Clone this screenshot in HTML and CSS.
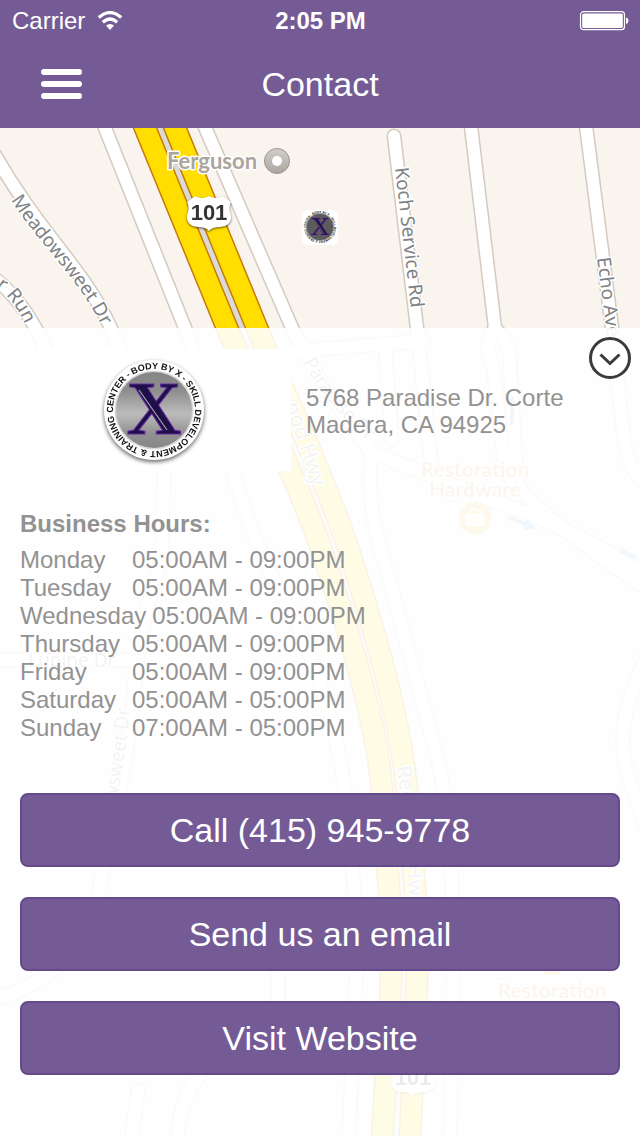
FILE: index.html
```html
<!DOCTYPE html>
<html lang="en">
<head>
<meta charset="utf-8">
<meta name="viewport" content="width=device-width, initial-scale=1">
<title>Contact</title>
<link rel="stylesheet" href="styles.css">
</head>
<body>
<div class="screen">
  <header class="header">
    <div class="status">
      <div class="status-left">
        <span>Carrier</span>
        <svg class="wifi" viewBox="0 0 26 20" aria-hidden="true">
          <path d="M1.800 6.600Q13-3.400 24.200 6.600" fill="none" stroke="#fff" stroke-width="3.400"/>
          <path d="M5.800 11.300Q13 4.700 20.200 11.300" fill="none" stroke="#fff" stroke-width="3.200"/>
          <path d="M9 14.500Q13 11.300 17 14.500L13 19z" fill="#fff"/>
        </svg>
      </div>
      <time class="clock">2:05 PM</time>
      <svg class="battery" viewBox="0 0 50 20" aria-hidden="true">
        <rect x="1.500" y=".7" width="44" height="18" rx="3" fill="none" stroke="#fff" stroke-width="1.200"/>
        <rect x="3.200" y="2.400" width="40.600" height="14.600" rx="1.600" fill="#fff"/>
        <path d="M47 6.500q2.500 .5 2.500 3.300t-2.500 3.300z" fill="#fff"/>
      </svg>
    </div>
    <nav class="nav">
      <button class="menu" type="button" aria-label="Menu"><span></span><span></span><span></span></button>
      <h1 class="title">Contact</h1>
    </nav>
  </header>

  <main class="main">
    <svg class="map" viewBox="0 128 640 1008" preserveAspectRatio="xMidYMin slice" aria-hidden="true">
      <defs>
        <linearGradient id="disc" x1="0" y1="0" x2="0" y2="1">
          <stop offset="0" stop-color="#858585"/><stop offset=".25" stop-color="#8e8e8e"/>
          <stop offset=".55" stop-color="#bcbcbc"/><stop offset=".8" stop-color="#929292"/>
          <stop offset="1" stop-color="#888"/>
        </linearGradient>
        <linearGradient id="place" x1="0" y1="0" x2="0" y2="1">
          <stop offset="0" stop-color="#d2cfca"/><stop offset="1" stop-color="#aaa69f"/>
        </linearGradient>
        <path id="ring-line" d="M-21-35.200A41 41 0 1 1-21.100-35.140"/>
        <g id="ring">
          <circle r="50" fill="#fff"/>
          <text class="ring-text"><textPath href="#ring-line">BODY BY X - SKILL DEVELOPMENT &amp; TRAINING CENTER -</textPath></text>
        </g>
        <g id="letter">
          <text class="letter" x="0" y="24" text-anchor="middle">X</text>
          <path d="M-15-20L13 20" fill="none" stroke="#a9a3b3" stroke-width="1.200"/>
        </g>
        <g id="shield">
          <path d="M-14-17Q-7-13 0-17Q7-13 14-17L22-11Q19-5 22 2Q23 13 11 14Q3 14 0 18Q-3 14-11 14Q-23 13-22 2Q-19-5-22-11Z"/>
          <text y="7" text-anchor="middle">101</text>
        </g>
        <path id="meadow" d="M11 200C34 238 82 282 103 329"/>
        <path id="run" d="M-4 287Q13 297 28 330"/>
        <path id="koch" d="M395 168L412 318"/>
        <path id="echo" d="M597 258L609 350"/>
        <path id="paradise" d="M303 362Q326 406 372 444"/>
        <path id="redwood" d="M264 355Q297 430 326 530"/>
        <path id="redwood-south" d="M396 767Q409 840 410 940"/>
        <path id="meadow-south" d="M107 862C116 800 126 760 130 700"/>
        <g id="streets" fill="none" stroke-linecap="round">
          <path d="M-8 150C44 242 88 270 116 340Q150 400 164 470L162 560Q140 620 134 690Q128 760 106 850L96 910Q70 980-10 1000"/>
          <path d="M-10 275Q25 300 46 350"/>
          <path d="M101 118L185 328L196 356"/>
          <path d="M201 118L292 328Q316 380 372 452L490 500Q580 530 650 578"/>
          <path d="M394 136L417 328L432 470"/>
          <path d="M470 118L495 328Q482 345 493 365L505 470Q540 520 650 590"/>
          <path d="M495 328Q512 345 510 365L517 480"/>
          <path d="M585 118L612 328L624 440Q630 475 650 486"/>
          <path d="M296 351L424 341"/><path d="M385 345L392 440"/>
          <path d="M372 452Q365 500 384 560Q408 650 438 760Q455 840 453 980L450 1150"/>
          <path d="M230 460Q250 540 290 610Q335 700 346 800Q358 900 356 980L348 1150"/>
          <path d="M0 660H138"/><path d="M650 650C600 750 630 770 650 840"/>
          <path d="M138 1090L130 1150"/><path d="M205 1070Q175 1100 178 1150"/><path d="M278 960V1020"/>
        </g>
        <g id="highway" fill="none">
          <path d="M141 118L227 328C260 405 302 490 325 560S360 670 373 730S383 830 387 867S392 950 391 980S385 1090 382 1140"/>
          <path d="M171 118L257 328C290 405 330 490 352 560S386 670 398 730S409 830 413 867S418 950 417 980S412 1090 410 1140"/>
        </g>
      </defs>
      <rect y="128" width="640" height="1008" fill="#f9f4ed"/>
      <use href="#streets" stroke="#d3cac0" stroke-width="15"/>
      <use href="#streets" stroke="#fff" stroke-width="12"/>
      <path d="M158 118L244 328C277 405 318 490 341 560S373 670 386 730S396 830 400 867S405 950 404 980S398 1090 396 1140" fill="none" stroke="#dcdad7" stroke-width="10"/>
      <use href="#highway" stroke="#c77a0c" stroke-width="23"/>
      <use href="#highway" stroke="#ffde00" stroke-width="20"/>

      <g class="road-label">
        <text><textPath href="#meadow">Meadowsweet Dr</textPath></text>
        <text><textPath href="#run">r Run</textPath></text>
        <text><textPath href="#koch">Koch Service Rd</textPath></text>
        <text><textPath href="#echo">Echo Ave</textPath></text>
        <text><textPath href="#paradise">Paradise Dr</textPath></text>
        <text class="road-major"><textPath href="#redwood">Redwood Hwy</textPath></text>
        <text class="road-major"><textPath href="#redwood-south">Redwood Hwy</textPath></text>
        <text><textPath href="#meadow-south">Meadowsweet Dr</textPath></text>
        <text x="28" y="667">Lupine Dr</text>
      </g>
      <text class="place-label" x="167" y="169">Ferguson</text>
      <circle cx="277" cy="161" r="12.500" fill="url(#place)" stroke="#99958e"/>
      <circle cx="277" cy="161" r="5" fill="#fff"/>
      <g class="shop-label" text-anchor="middle">
        <text x="475" y="477">Restoration</text><text x="475" y="497">Hardware</text>
        <text x="552" y="998">Restoration</text>
      </g>
      <circle cx="475" cy="518" r="16.500" fill="#f5c04a"/>
      <path d="M466 514h18v12h-18z" fill="#fff"/>
      <path d="M470 514v-2q5-7 10 0v2" fill="none" stroke="#fff" stroke-width="2"/>
      <path d="M470 518h10M470 522h8" fill="none" stroke="#f5c04a"/>
      <circle cx="552" cy="960" r="15" fill="#efb95a"/>
      <path d="M508 517L530 526M637 558L622 551M512 425V400" fill="none" stroke="#65b8f2" stroke-width="4"/>
      <path d="M527 519L537 529L523 530zM622 547L620 553L632 559zM507 405L512 395L517 405z" fill="#65b8f2"/>
      <use href="#shield" class="shield" x="209" y="213"/>
      <use href="#shield" class="shield" x="413" y="1078"/>

      <rect x="302" y="210" width="36" height="35" rx="6" fill="#fff"/>
      <g transform="translate(320 227) scale(.34)">
        <use href="#ring"/><circle r="40" fill="#5c5c5c" stroke="#888" stroke-width="2"/>
        <use href="#letter"/>
      </g>
    </svg>

    <section class="panel">
      <button class="collapse" type="button" aria-label="Hide details">
        <svg viewBox="0 0 42 42" aria-hidden="true">
          <circle cx="21" cy="21" r="19.500" fill="#fff" stroke="#3b3b3b" stroke-width="3"/>
          <path d="M11.500 17.500L21 26.500L30.500 17.500" fill="none" stroke="#3b3b3b" stroke-width="3"/>
        </svg>
      </button>

      <div class="intro">
        <div class="brand">
          <svg class="logo" viewBox="-54 -54 108 112" role="img" aria-label="Body by X">
            <g class="logo-shadow"><use href="#ring"/></g>
            <circle r="39.500" fill="#d8d8d8"/>
            <circle r="38" fill="url(#disc)"/>
            <use href="#letter"/>
          </svg>
        </div>
        <address class="address">5768 Paradise Dr. Corte Madera, CA 94925</address>
      </div>

      <h2 class="hours-title" id="hours-title">Business Hours:</h2>
      <table class="hours" aria-labelledby="hours-title">
        <tbody>
          <tr><th scope="row">Monday</th><td>05:00AM - 09:00PM</td></tr>
          <tr><th scope="row">Tuesday</th><td>05:00AM - 09:00PM</td></tr>
          <tr><th scope="row">Wednesday</th><td>05:00AM - 09:00PM</td></tr>
          <tr><th scope="row">Thursday</th><td>05:00AM - 09:00PM</td></tr>
          <tr><th scope="row">Friday</th><td>05:00AM - 09:00PM</td></tr>
          <tr><th scope="row">Saturday</th><td>05:00AM - 05:00PM</td></tr>
          <tr><th scope="row">Sunday</th><td>07:00AM - 05:00PM</td></tr>
        </tbody>
      </table>

      <div class="actions">
        <button class="action" type="button">Call (415) 945-9778</button>
        <button class="action" type="button">Send us an email</button>
        <button class="action" type="button">Visit Website</button>
      </div>
    </section>
  </main>
</div>
</body>
</html>
```
FILE: styles.css
```css
* {
  box-sizing: border-box;
}

body {
  margin: 0;
  font-family: "Liberation Sans", Arial, sans-serif;
  font-size: 24px;
  color: #929292;
}

button {
  margin: 0;
  padding: 0;
  border: 0;
  background: none;
  color: inherit;
  font: inherit;
}

.screen {
  display: flex;
  flex-direction: column;
  min-height: 100vh;
}

/* Header */
.header {
  background: #745b96;
  color: #fff;
}

.status {
  display: grid;
  grid-template-columns: 1fr auto 1fr;
  align-items: center;
  height: 40px;
  padding: 2px 11px 0 12px;
}

.status-left {
  display: flex;
  align-items: center;
  gap: 12px;
}

.wifi {
  width: 26px;
  height: 20px;
}

.clock {
  font-weight: bold;
}

.battery {
  justify-self: end;
  width: 50px;
  height: 20px;
}

.nav {
  display: grid;
  grid-template-columns: 82px 1fr 82px;
  align-items: center;
  height: 88px;
}

.menu {
  display: flex;
  flex-direction: column;
  justify-self: end;
  gap: 6px;
  width: 41px;
}

.menu span {
  height: 6px;
  border-radius: 3px;
  background: #fff;
}

.title {
  margin: 0;
  font-size: 34px;
  font-weight: normal;
  text-align: center;
}

/* Map */
.main {
  position: relative;
  flex: 1;
  display: flex;
  flex-direction: column;
  padding-top: 200px;
  overflow: hidden;
}

.map {
  position: absolute;
  inset: 0;
  width: 100%;
  height: 100%;
}

.road-label,
.place-label,
.shop-label {
  paint-order: stroke;
  stroke: #fff;
  stroke-width: 3px;
  stroke-linejoin: round;
}

.road-label {
  font: 19px "Noto Sans", sans-serif;
  fill: #7f8285;
}

.road-major {
  font-size: 21px;
}

.place-label {
  font: bold 22px Lato, sans-serif;
  fill: #aaa59d;
}

.shop-label {
  font: bold 21px Lato, sans-serif;
  fill: #d6a566;
}

.shield {
  font: bold 22px "Liberation Sans", Arial, sans-serif;
  fill: #fff;
  filter: drop-shadow(0 1px 1px rgba(0, 0, 0, 0.6));
}

#shield text {
  fill: #333;
}

.ring-text {
  font: bold 9px "Liberation Sans", Arial, sans-serif;
  fill: #111;
}

.letter {
  font: bold 76px "Liberation Serif", serif;
  fill: #1e1047;
  stroke: #652aa5;
  stroke-width: 1px;
}

/* Details */
.panel {
  position: relative;
  flex: 1;
  padding: 21px 20px 61px;
  background: rgba(255, 255, 255, 0.9);
}

.collapse {
  position: absolute;
  top: 9px;
  right: 9px;
  width: 42px;
  height: 42px;
}

.collapse svg {
  display: block;
}

.intro {
  display: grid;
  grid-template-columns: 271px 1fr;
  align-items: center;
  gap: 15px;
}

.brand {
  display: flex;
  justify-content: center;
  padding: 7px 3px 3px 0;
  background: #fff;
}

.logo {
  width: 108px;
  height: 112px;
}

.logo-shadow {
  filter: drop-shadow(0 2px 2px rgba(0, 0, 0, 0.6));
}

.address {
  padding-top: 2px;
  font-style: normal;
  line-height: 27px;
}

.hours-title {
  margin: 38px 0 7px;
  font-size: 24px;
  line-height: 30px;
}

.hours {
  display: block;
  line-height: 28px;
}

.hours tbody {
  display: block;
}

.hours tr {
  display: flex;
}

.hours th,
.hours td {
  padding: 0;
  font-weight: normal;
  text-align: left;
}

.hours th {
  min-width: 112px;
  padding-right: 6px;
}

.actions {
  display: grid;
  gap: 30px;
  margin-top: 51px;
}

.action {
  height: 74px;
  border: 2px solid #644a8a;
  border-radius: 8px;
  background: #745b96;
  color: #fff;
  font-size: 34px;
}
```
